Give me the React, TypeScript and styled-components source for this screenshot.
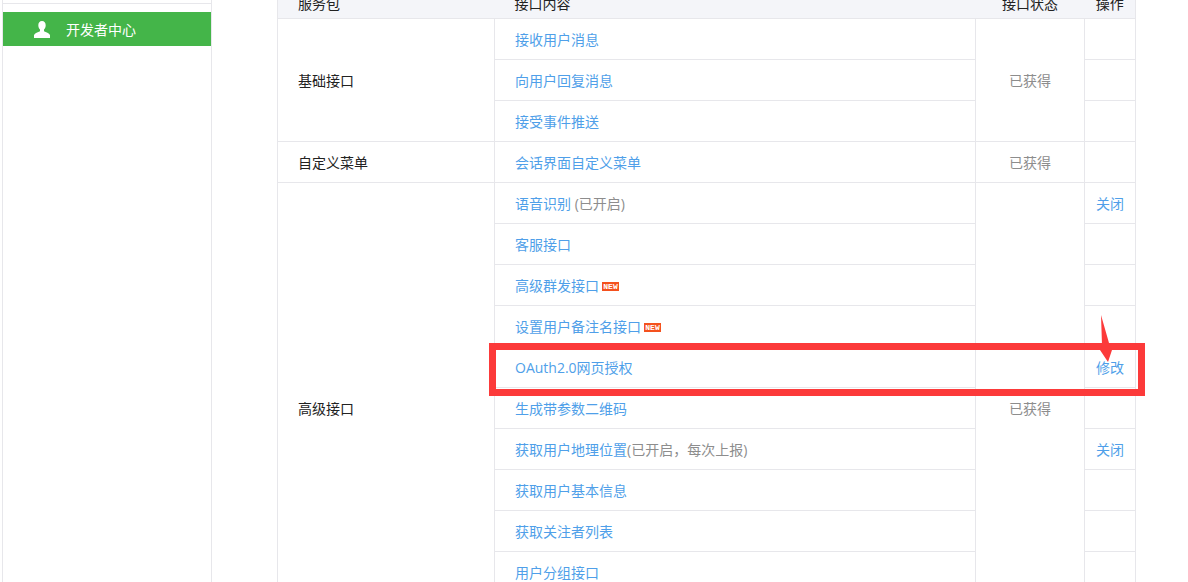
import { createGlobalStyle } from 'styled-components';
import styled from 'styled-components';

const GlobalStyle = createGlobalStyle`
  html, body {
    margin: 0;
    padding: 0;
    height: 582px;
    overflow: hidden;
    background: #fff;
  }
  body {
    font-family: "Open Sans", "Noto Sans CJK SC", "Liberation Sans", sans-serif;
    font-size: 14px;
    color: #222;
  }
`;

const Page = styled.div`
  position: relative;
  display: flex;
  height: 582px;
  overflow: hidden;
  padding-left: 2px;
`;

const Sidebar = styled.aside`
  flex: none;
  width: 208px;
  height: 582px;
  border-left: 1px solid #e7e7eb;
  border-right: 1px solid #e7e7eb;
`;

const SidebarTop = styled.div`
  height: 3px;
  border-bottom: 1px solid #e7e7eb;
  margin-bottom: 8px;
`;

const SidebarItem = styled.div`
  display: flex;
  align-items: center;
  height: 34px;
  padding-left: 31px;
  gap: 16px;
  background: #44b549;
  color: #fff;
`;

const Content = styled.main`
  flex: none;
  margin-left: 65px;
  margin-top: -12px;
`;

const Table = styled.table`
  width: 858px;
  border-collapse: collapse;
  table-layout: fixed;
`;

const HeadCell = styled.th<{ $center?: boolean }>`
  height: 30px;
  padding: 0 0 0 ${p => (p.$center ? 0 : 20)}px;
  background: #f4f5f9;
  border: 0;
  border-bottom: 1px solid #e7e7eb;
  font-weight: 400;
  text-align: ${p => (p.$center ? 'center' : 'left')};
  &:first-child {
    border-left: 1px solid #e7e7eb;
  }
  &:last-child {
    border-right: 1px solid #e7e7eb;
  }
`;

const Row = styled.tr`
  height: 41px;
`;

const Cell = styled.td`
  padding: 0 0 0 20px;
  border: 1px solid #e7e7eb;
`;

const StatusCell = styled.td`
  padding: 0;
  border: 1px solid #e7e7eb;
  text-align: center;
  color: #8d8d8d;
`;

const ActionCell = styled.td`
  padding: 0;
  border: 1px solid #e7e7eb;
  text-align: center;
  color: #4f9fe9;
`;

const Link = styled.span`
  color: #4f9fe9;
`;

const Note = styled.span`
  color: #8d8d8d;
`;

const NewBadge = styled.span`
  display: inline-block;
  width: 17px;
  height: 9px;
  margin-left: 3px;
  background: #f4511e;
  color: #fff;
  font-family: "Liberation Mono", monospace;
  font-size: 8px;
  font-weight: 700;
  line-height: 9px;
  text-align: center;
  vertical-align: 2px;
`;

const Highlight = styled.div`
  position: absolute;
  left: 489px;
  top: 343px;
  width: 656px;
  height: 53px;
  box-sizing: border-box;
  border: solid #fc3a3a;
  border-width: 7px;
  pointer-events: none;
`;

const Arrow = styled.svg`
  position: absolute;
  left: 1095px;
  top: 312px;
  pointer-events: none;
`;

type Api = {
  name: string;
  note?: string;
  isNew?: boolean;
  action?: string;
};

const groups: { title: string; apis: Api[] }[] = [
  {
    title: '基础接口',
    apis: [{ name: '接收用户消息' }, { name: '向用户回复消息' }, { name: '接受事件推送' }],
  },
  {
    title: '自定义菜单',
    apis: [{ name: '会话界面自定义菜单' }],
  },
  {
    title: '高级接口',
    apis: [
      { name: '语音识别', note: ' (已开启)', action: '关闭' },
      { name: '客服接口' },
      { name: '高级群发接口', isNew: true },
      { name: '设置用户备注名接口', isNew: true },
      { name: 'OAuth2.0网页授权', action: '修改' },
      { name: '生成带参数二维码' },
      { name: '获取用户地理位置', note: '(已开启，每次上报)', action: '关闭' },
      { name: '获取用户基本信息' },
      { name: '获取关注者列表' },
      { name: '用户分组接口' },
      { name: '上传下载多媒体文件' },
    ],
  },
];

const App = () => {
  return (
    <Page>
      <GlobalStyle />
      <Sidebar>
        <SidebarTop />
        <SidebarItem>
          <svg width="16" height="17" viewBox="0 0 16 17" fill="#fff">
            <path d="M8 0C5.700 0 4.300 1.800 4.300 4.200c0 1.800.7 3.300 1.700 4.300v1.700C4 11.300.8 11.900 0 14v3h16v-3c-.8-2.100-4-2.700-6-3.800V8.500c1-1 1.700-2.500 1.700-4.300C11.700 1.800 10.300 0 8 0z" />
          </svg>
          开发者中心
        </SidebarItem>
      </Sidebar>
      <Content>
        <Table>
          <colgroup>
            <col style={{ width: 217 }} />
            <col style={{ width: 481 }} />
            <col style={{ width: 109 }} />
            <col style={{ width: 51 }} />
          </colgroup>
          <thead>
            <tr>
              <HeadCell>服务包</HeadCell>
              <HeadCell>接口内容</HeadCell>
              <HeadCell $center>接口状态</HeadCell>
              <HeadCell $center>操作</HeadCell>
            </tr>
          </thead>
          <tbody>
            {groups.map(group =>
              group.apis.map((api, i) => (
                <Row key={api.name}>
                  {i === 0 && <Cell rowSpan={group.apis.length}>{group.title}</Cell>}
                  <Cell>
                    <Link>{api.name}</Link>
                    {api.note && <Note>{api.note}</Note>}
                    {api.isNew && <NewBadge>NEW</NewBadge>}
                  </Cell>
                  {i === 0 && <StatusCell rowSpan={group.apis.length}>已获得</StatusCell>}
                  <ActionCell>{api.action}</ActionCell>
                </Row>
              ))
            )}
          </tbody>
        </Table>
      </Content>
      <Highlight />
      <Arrow width="22" height="54" viewBox="0 0 22 54">
        <path d="M6 3 L14 31 L17 38 L13 50 L5 38 L7 33 Z" fill="#fc3a3a" />
      </Arrow>
    </Page>
  );
};

export default App;
